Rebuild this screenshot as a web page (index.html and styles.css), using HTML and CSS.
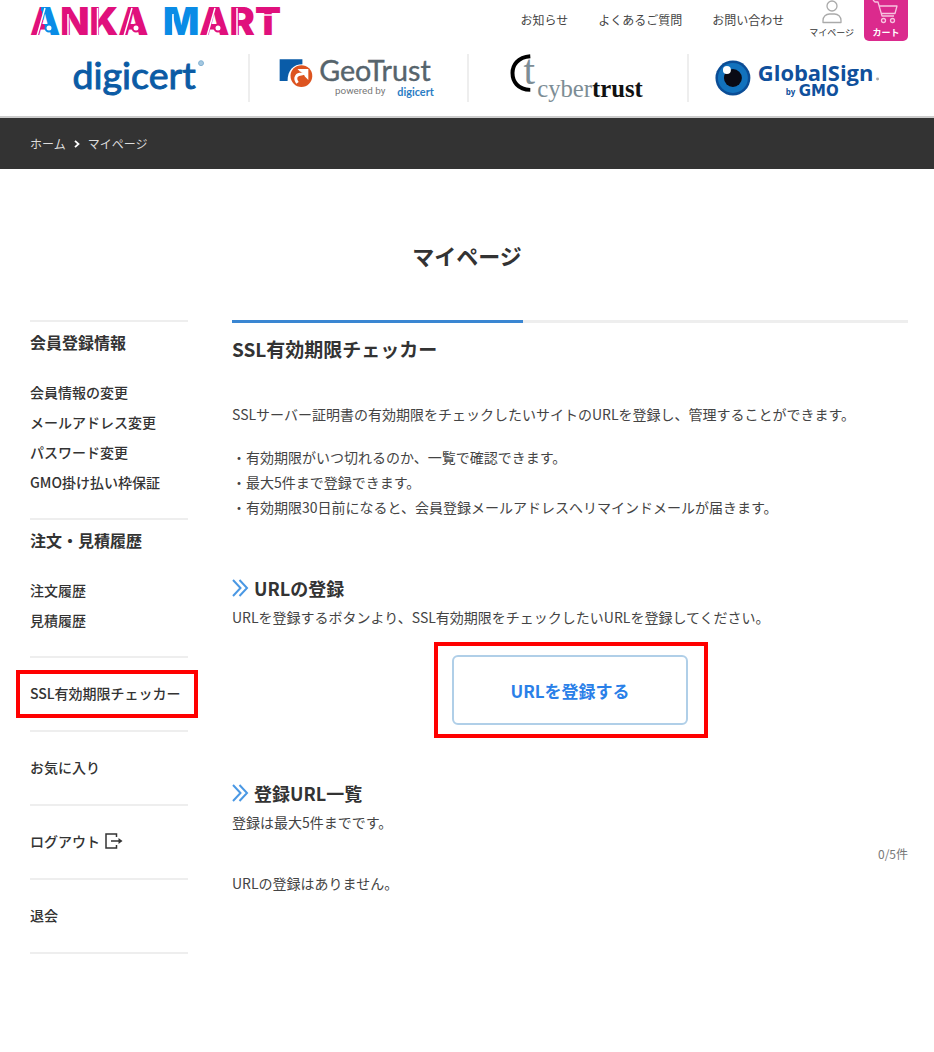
FILE: index.html
```html
<!DOCTYPE html>
<html lang="ja">
<head>
	<meta charset="UTF-8">
	<meta name="viewport" content="width=device-width, initial-scale=1">
	<title>マイページ | ANKA MART</title>
	<link rel="stylesheet" href="styles.css">
</head>
<body>
	<header class="header">
		<div class="header-top">
			<a href="#" class="logo">
				<svg width="254" height="44" viewBox="0 0 254 44" role="img" aria-label="ANKA MART">
					<defs>
						<linearGradient id="split" gradientUnits="userSpaceOnUse" x1="0" y1="20" x2="28" y2="14">
							<stop offset=".46" stop-color="#e0107c"/>
							<stop offset=".46" stop-color="#0a8ce6"/>
						</linearGradient>
					</defs>
					<g class="logo-text">
						<text x="0" y="35"><tspan fill="url(#split)">A</tspan><tspan class="pink">NKA</tspan></text>
						<text x="133" y="35"><tspan class="blue">M</tspan><tspan class="pink">ART</tspan></text>
					</g>
					<!-- stencil cuts -->
					<g fill="none" stroke="#fff" stroke-width="1.500">
						<path d="M15 8L7 36M38 14v22M67.500 8v28M102 8l-8 28M143 14v22M185 8l-8 28M207 8v28M224 15h28"/>
					</g>
					<g fill="#fff" stroke-width="2">
						<circle cx="19" cy="28" r="3.500" stroke="#0a8ce6"/>
						<circle cx="106" cy="28" r="3.500" stroke="#e0107c"/>
						<circle cx="188" cy="28" r="3.500" stroke="#e0107c"/>
					</g>
				</svg>
			</a>
			<nav class="header-nav">
				<a href="#">お知らせ</a>
				<a href="#">よくあるご質問</a>
				<a href="#">お問い合わせ</a>
			</nav>
			<a href="#" class="header-user">
				<svg width="20" height="24" viewBox="0 0 20 24" fill="none" stroke="#aaa" stroke-width="1.300">
					<circle cx="10" cy="6" r="5"/>
					<path d="M1 22.500v-2c0-4 3-6.500 6.500-6.500h5c3.500 0 6.500 2.500 6.500 6.500v2z" stroke-linejoin="round"/>
				</svg>
				<span>マイページ</span>
			</a>
			<a href="#" class="header-cart">
				<svg width="28" height="24" viewBox="0 0 28 24" fill="none" stroke="#f7c3e0" stroke-width="1.300">
					<path d="M1 0l2 2h3l4 14h12M7 6h18l-2 7.500H9.500" stroke-linejoin="round"/>
					<circle cx="11.500" cy="20.500" r="2"/>
					<circle cx="20.500" cy="20.500" r="2"/>
				</svg>
				<span>カート</span>
			</a>
		</div>
		<ul class="brands">
			<li>
				<svg viewBox="0 0 220 48" preserveAspectRatio="xMinYMid" role="img" aria-label="digicert">
					<text class="digicert" x="43" y="35">digicert</text>
					<circle cx="173" cy="9" r="2.500" fill="#a5c8e0" stroke="#7fb0d2"/>
				</svg>
			</li>
			<li>
				<svg viewBox="0 0 220 48" preserveAspectRatio="xMinYMid" role="img" aria-label="GeoTrust powered by digicert">
					<path d="M30 5h23v5c-9 0-15 6-15 17h-8z" fill="#0a5ca8"/>
					<circle cx="52" cy="22" r="11" fill="#dd5420"/>
					<path d="M48 29c-4-6 0-9 4-9l4-1" fill="none" stroke="#fff" stroke-width="3"/>
					<path d="M48 15h11v11l-3.500-3.500-2-4-3-1z" fill="#fff"/>
					<text class="geotrust" x="70" y="27">GeoTrust</text>
					<text class="powered" x="86" y="40">powered by</text>
					<text class="digicert-small" x="149" y="42">digicert</text>
				</svg>
			</li>
			<li>
				<svg viewBox="0 0 220 48" preserveAspectRatio="xMinYMid" role="img" aria-label="cybertrust">
					<path d="M62 2C49 3 44 11 44 19S49 36 62 36" fill="none" stroke="#000" stroke-width="4"/>
					<text class="cyber-mark" x="55" y="30">t</text>
					<text class="cyber" x="69" y="43">cyber<tspan class="trust">trust</tspan></text>
				</svg>
			</li>
			<li>
				<svg viewBox="0 0 220 48" preserveAspectRatio="xMinYMid" role="img" aria-label="GlobalSign by GMO">
					<circle cx="44" cy="24" r="17.500" fill="#0b4d96"/>
					<circle cx="44" cy="24" r="15" fill="#1272bd"/>
					<circle cx="44" cy="24" r="9" fill="#0a0a14"/>
					<circle cx="38" cy="16" r="4" fill="#fff"/>
					<text class="globalsign" x="69" y="27">GlobalSign</text>
					<circle cx="189" cy="25" r="1.500" fill="#aaa"/>
					<text class="by" x="97" y="41">by</text>
					<text class="gmo" x="110" y="42">GMO</text>
				</svg>
			</li>
		</ul>
	</header>

	<nav class="breadcrumb">
		<a href="#">ホーム</a>
		<svg width="6" height="8" viewBox="0 0 6 8" fill="none" stroke="#fff" stroke-width="1.800"><path d="M1 .8L4.500 4 1 7.200"/></svg>
		<span>マイページ</span>
	</nav>

	<h1 class="page-title">マイページ</h1>

	<div class="container">
		<aside class="sidebar">
			<section class="side-group">
				<h2>会員登録情報</h2>
				<ul>
					<li><a href="#">会員情報の変更</a></li>
					<li><a href="#">メールアドレス変更</a></li>
					<li><a href="#">パスワード変更</a></li>
					<li><a href="#">GMO掛け払い枠保証</a></li>
				</ul>
			</section>
			<section class="side-group">
				<h2>注文・見積履歴</h2>
				<ul>
					<li><a href="#">注文履歴</a></li>
					<li><a href="#">見積履歴</a></li>
				</ul>
			</section>
			<ul class="side-links">
				<li class="marked"><a href="#">SSL有効期限チェッカー</a></li>
				<li><a href="#">お気に入り</a></li>
				<li>
					<a href="#">ログアウト
						<svg width="18" height="16" viewBox="0 0 18 16" fill="none" stroke="#333" stroke-width="1.500">
							<path d="M11.500 4V1H1v14h10.500v-3M6 8h9"/>
							<path d="M13.500 5l4 3-4 3z" fill="#333" stroke="none"/>
						</svg>
					</a>
				</li>
				<li><a href="#">退会</a></li>
			</ul>
		</aside>

		<main class="content">
			<h2>SSL有効期限チェッカー</h2>
			<p class="lead">SSLサーバー証明書の有効期限をチェックしたいサイトのURLを登録し、管理することができます。</p>
			<ul class="notes">
				<li>・有効期限がいつ切れるのか、一覧で確認できます。</li>
				<li>・最大5件まで登録できます。</li>
				<li>・有効期限30日前になると、会員登録メールアドレスへリマインドメールが届きます。</li>
			</ul>

			<h3>
				<svg width="17" height="18" viewBox="0 0 17 18" fill="none" stroke="#4a98e4" stroke-width="2"><path d="M1 1l7.500 8L1 17M7.500 1L15 9l-7.500 8"/></svg>
				URLの登録
			</h3>
			<p>URLを登録するボタンより、SSL有効期限をチェックしたいURLを登録してください。</p>
			<div class="register">
				<button type="button">URLを登録する</button>
			</div>

			<h3>
				<svg width="17" height="18" viewBox="0 0 17 18" fill="none" stroke="#4a98e4" stroke-width="2"><path d="M1 1l7.500 8L1 17M7.500 1L15 9l-7.500 8"/></svg>
				登録URL一覧
			</h3>
			<p>登録は最大5件までです。</p>
			<p class="count">0/5件</p>
			<p>URLの登録はありません。</p>
		</main>
	</div>
</body>
</html>
```
FILE: styles.css
```css
*{
	box-sizing: border-box;
}
body{
	margin: 0;
	font-family: "Noto Sans CJK JP", sans-serif;
	font-size: 14px;
	line-height: 25px;
	color: #333;
	background: #fff;
}
h1, h2, h3, p, ul{
	margin: 0;
	padding: 0;
}
ul{
	list-style: none;
}
a{
	color: inherit;
	text-decoration: none;
}
svg{
	display: block;
	overflow: visible;
}

/* header */
.header{
	padding: 0 26px 14px 30px;
	border-bottom: 2px solid #ccc;
}
.header-top{
	display: flex;
	align-items: flex-start;
	height: 54px;
}
.logo{
	margin-right: auto;
}
.logo-text{
	font: 900 38px Inter, sans-serif;
}
.pink{
	fill: #e0107c;
}
.blue{
	fill: #0a8ce6;
}
.header-nav{
	display: flex;
	gap: 30px;
	padding-top: 7px;
	color: #444;
	font-size: 12px;
}
.header-user{
	display: flex;
	flex-direction: column;
	align-items: center;
	margin: 0 10px 0 25px;
	font-size: 9px;
	line-height: 17px;
}
.header-cart{
	display: flex;
	flex-direction: column;
	align-items: center;
	width: 44px;
	height: 41px;
	border-radius: 0 0 5px 5px;
	background: #db2a8d;
	color: #fff;
	font-size: 9px;
	font-weight: bold;
	line-height: 17px;
}
.brands{
	display: grid;
	grid-template-columns: repeat(4, minmax(0, 1fr));
}
.brands li{
	border-right: 2px solid #eee;
}
.brands li:last-child{
	border-right: 0;
}
.brands svg{
	width: 100%;
	height: 48px;
}
.digicert{
	font: 38px Lato, sans-serif;
	fill: #0b5ba5;
	stroke: #0b5ba5;
	stroke-width: 1px;
}
.digicert-small{
	font: bold 11px Lato, sans-serif;
	fill: #2a7cc4;
}
.geotrust{
	font: 29px Lato, sans-serif;
	fill: #56646c;
	stroke: #56646c;
	stroke-width: .4px;
}
.powered{
	font: 10px Roboto, sans-serif;
	fill: #777;
}
.cyber-mark{
	font: 42px "Liberation Serif", serif;
	fill: #7d8d95;
}
.cyber{
	font: 25px "Liberation Serif", serif;
	fill: #7d8d95;
}
.trust{
	font-weight: bold;
	fill: #111;
}
.globalsign{
	font: bold 22px "Open Sans", sans-serif;
	fill: #10509c;
}
.by{
	font: bold 8px "Open Sans", sans-serif;
	fill: #10509c;
}
.gmo{
	font: bold 15px "DejaVu Sans", sans-serif;
	fill: #10509c;
}

/* breadcrumb */
.breadcrumb{
	display: flex;
	align-items: center;
	gap: 8px;
	padding: 13px 30px;
	background: #333;
	color: #ddd;
	font-size: 12px;
}

.page-title{
	margin: 70px 0 49px;
	font-size: 22px;
	line-height: 32px;
	text-align: center;
}
.container{
	display: grid;
	grid-template-columns: 158px 1fr;
	column-gap: 44px;
	padding: 0 26px 100px 30px;
}

/* sidebar */
.sidebar{
	font-weight: 500;
}
.side-group{
	padding: 8px 0 21px;
	border-top: 2px solid #eee;
}
.side-group h2{
	margin-bottom: 23px;
	font-size: 16px;
	line-height: 24px;
}
.side-group li{
	line-height: 30px;
}
.side-links{
	border-top: 2px solid #eee;
}
.side-links li{
	position: relative;
	padding: 23px 0 25px;
	border-bottom: 2px solid #eee;
	line-height: 24px;
}
.side-links a{
	display: flex;
	align-items: center;
	gap: 5px;
	white-space: nowrap;
}
.marked::after{
	content: "";
	position: absolute;
	inset: 12px -10px 12px -14px;
	border: 4px solid #f00;
	pointer-events: none;
}

/* content */
.content{
	position: relative;
	padding-top: 11px;
	border-top: 3px solid #eee;
}
.content::before{
	content: "";
	position: absolute;
	top: -3px;
	left: 0;
	width: 43%;
	height: 3px;
	background: #3a86d2;
}
.content h2{
	font-size: 19px;
	line-height: 30px;
}
.content h3{
	display: flex;
	align-items: center;
	gap: 5px;
	margin: 55px 0 4px;
	font-size: 18px;
	line-height: 26px;
}
.content p,
.notes{
	color: #444;
}
.content .lead{
	margin: 38px 0 18px;
}
.register{
	position: relative;
	width: 236px;
	margin: 25px auto 0;
}
.register::after{
	content: "";
	position: absolute;
	inset: -13px -20px -13px -18px;
	border: 4px solid #f00;
	pointer-events: none;
}
.register button{
	display: block;
	width: 100%;
	height: 70px;
	border: 2px solid #b0cfe8;
	border-radius: 6px;
	background: #fff;
	color: #2a80e8;
	font: bold 17px "Noto Sans CJK JP", sans-serif;
	cursor: pointer;
}
.content .count{
	margin: 6px 0 5px;
	color: #777;
	font-size: 12px;
	text-align: right;
}
```
